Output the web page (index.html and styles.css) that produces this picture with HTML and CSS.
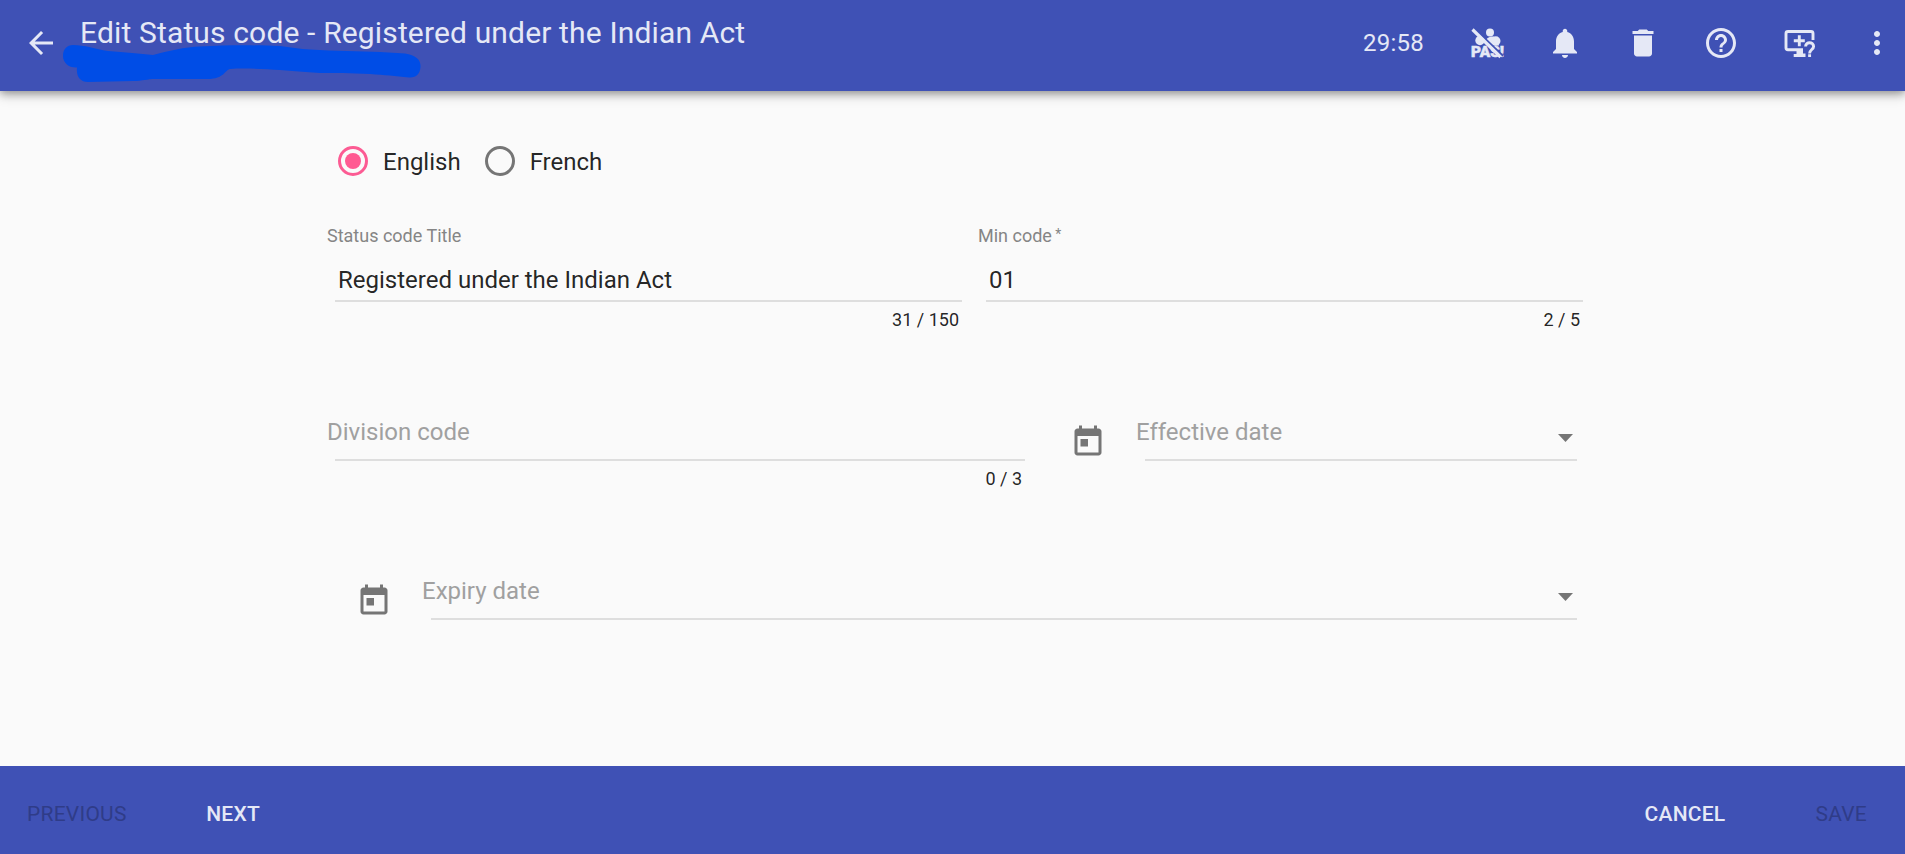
FILE: index.html
```html
<!DOCTYPE html>
<html lang="en">
<head>
<meta charset="utf-8">
<title>Edit Status code</title>
<link rel="stylesheet" href="styles.css">
</head>
<body>
<header class="toolbar">
  <svg class="icon back" viewBox="0 0 24 24"><path d="M20 11H7.83l5.59-5.59L12 4l-8 8 8 8 1.41-1.41L7.83 13H20v-2z"/></svg>
  <h1 class="title">Edit Status code - Registered under the Indian Act</h1>
  <svg class="marker" viewBox="60 40 364 46"><path d="M73 45C85 45 95 49 108 51C125 52 140 54 153 55C168 51 185 47 200 46.500C225 45 255 45 280 46C290 47 300 49 310 49.500C335 51 360 51 380 52L405 53.500C416 55 421 60 420.500 67C420 74 416 78 409 77.500C395 76 385 75 370 74C350 73 335 73 320 73C305 72 292 71 280 70C265 69 245 68 230 69C225 70 224 79 208 79H155C147 79 143 81 133 81L88 82C80 82 76 76 77 67.500C69 68 63 63 63 56C63 49 67 45 73 45Z"/></svg>
  <div class="actions">
    <span class="timer">29:58</span>
    <svg class="icon" viewBox="0 0 36 36">
      <circle cx="21" cy="7.500" r="4"/><circle cx="11" cy="15.500" r="4.700"/>
      <circle cx="26.800" cy="16" r="4.700"/><path d="M17 14.500c2-2.500 5-3 8-3l5 9H22z"/>
      <text class="pas" x="2" y="31.500" textLength="33" lengthAdjust="spacingAndGlyphs">PAS!</text>
      <path class="cut" d="M5.500 3.500L34 31"/><path class="slash" d="M3.500 4.500L31.500 32"/>
    </svg>
    <svg class="icon" viewBox="0 0 24 24"><path d="M12 22c1.100 0 2-.9 2-2h-4c0 1.100.89 2 2 2zm6-6v-5c0-3.070-1.640-5.640-4.500-6.320V4c0-.83-.67-1.500-1.500-1.500s-1.500.67-1.500 1.500v.68C7.630 5.360 6 7.920 6 11v5l-2 2v1h16v-1l-2-2z"/></svg>
    <svg class="icon" viewBox="0 0 24 24"><path d="M6 19c0 1.100.9 2 2 2h8c1.100 0 2-.9 2-2V7H6v12zM19 4h-3.500l-1-1h-5l-1 1H5v2h14V4z"/></svg>
    <svg class="icon" viewBox="0 0 24 24"><path d="M11 18h2v-2h-2v2zm1-16C6.480 2 2 6.480 2 12s4.480 10 10 10 10-4.480 10-10S17.520 2 12 2zm0 18c-4.410 0-8-3.590-8-8s3.590-8 8-8 8 3.590 8 8-3.590 8-8 8zm0-14c-2.210 0-4 1.790-4 4h2c0-1.100.9-2 2-2s2 .9 2 2c0 2-3 1.750-3 5h2c0-2.250 3-2.500 3-5 0-2.210-1.790-4-4-4z"/></svg>
    <svg class="icon" viewBox="0 0 36 36">
      <path class="line" d="M22 24.800H7a2 2 0 0 1-2-2V8.500a2 2 0 0 1 2-2h23a2 2 0 0 1 2 2V15"/>
      <path class="line" d="M18.300 10.200v11M12.800 15.700h11"/>
      <path d="M15.500 25h6.500v3.500h2.500V32H12.700v-3h2.800z"/>
      <path class="line" d="M24.600 21.500c0-5 8-5 8 0 0 3-4 3.200-4 7M28.600 29.300v2.800"/>
    </svg>
    <svg class="icon" viewBox="0 0 24 24"><path d="M12 8c1.100 0 2-.9 2-2s-.9-2-2-2-2 .9-2 2 .9 2 2 2zm0 2c-1.100 0-2 .9-2 2s.9 2 2 2 2-.9 2-2-.9-2-2-2zm0 6c-1.100 0-2 .9-2 2s.9 2 2 2 2-.9 2-2-.9-2-2-2z"/></svg>
  </div>
</header>
<main class="content">
  <div class="radios">
    <label class="radio checked"><span class="ring"></span><span class="radio-text">English</span></label>
    <label class="radio"><span class="ring"></span><span class="radio-text">French</span></label>
  </div>
  <div class="row row-top">
    <div class="field title-field">
      <div class="label small">Status code Title</div>
      <div class="value">Registered under the Indian Act</div>
      <div class="count">31 / 150</div>
    </div>
    <div class="field min-field">
      <div class="label small">Min code<span class="star"> *</span></div>
      <div class="value">01</div>
      <div class="count">2 / 5</div>
    </div>
  </div>
  <div class="row">
    <div class="field division">
      <div class="label">Division code</div>
      <div class="rule"></div>
      <div class="count">0 / 3</div>
    </div>
    <svg class="icon cal cal-effective" viewBox="0 0 24 24"><path d="M19 3h-1V1h-2v2H8V1H6v2H5c-1.110 0-1.990.9-1.990 2L3 19c0 1.100.89 2 2 2h14c1.100 0 2-.9 2-2V5c0-1.100-.9-2-2-2zm0 16H5V8h14v11zM7 10h5v5H7z"/></svg>
    <div class="field date">
      <div class="label">Effective date<span class="arrow"></span></div>
      <div class="rule"></div>
    </div>
  </div>
  <div class="row">
    <svg class="icon cal cal-expiry" viewBox="0 0 24 24"><path d="M19 3h-1V1h-2v2H8V1H6v2H5c-1.110 0-1.990.9-1.990 2L3 19c0 1.100.89 2 2 2h14c1.100 0 2-.9 2-2V5c0-1.100-.9-2-2-2zm0 16H5V8h14v11zM7 10h5v5H7z"/></svg>
    <div class="field date">
      <div class="label">Expiry date<span class="arrow"></span></div>
      <div class="rule"></div>
    </div>
  </div>
</main>
<footer class="footer">
  <span class="btn off previous">PREVIOUS</span>
  <span class="btn next">NEXT</span>
  <span class="btn cancel">CANCEL</span>
  <span class="btn off">SAVE</span>
</footer>
</body>
</html>
```

FILE: styles.css
```css
* { box-sizing: border-box; }
body {
  margin: 0;
  height: 854px;
  display: flex;
  flex-direction: column;
  background: #fafafa;
  color: rgba(0, 0, 0, .87);
  font-family: Roboto, sans-serif;
  font-size: 24px;
  letter-spacing: .01em;
  overflow: hidden;
}
.toolbar {
  position: relative;
  flex: none;
  height: 91px;
  display: flex;
  align-items: center;
  padding: 0 10px 5px 23px;
  background: #3f51b5;
  color: #e5e8f6;
  box-shadow: 0 2px 8px rgba(0, 0, 0, .3), 0 4px 12px rgba(0, 0, 0, .2);
}
.icon { display: block; flex: none; width: 36px; height: 36px; fill: currentColor; }
.title {
  align-self: flex-start;
  margin: 15px 0 0 21px;
  font-size: 30px;
  line-height: 36px;
  font-weight: 400;
  letter-spacing: .005em;
  white-space: nowrap;
}
.marker { position: absolute; left: 60px; top: 40px; width: 364px; height: 46px; fill: #004de6; }
.actions { display: flex; align-items: center; gap: 42px; margin-left: auto; }
.timer { line-height: 28px; margin-right: 3px; }
.pas { font-size: 14.5px; font-weight: 900; letter-spacing: 0; stroke: currentColor; stroke-width: .5px; }
.cut { stroke: #3f51b5; stroke-width: 2; }
.slash { stroke: currentColor; stroke-width: 3.2; }
.line { fill: none; stroke: currentColor; stroke-width: 2.9; }
.content { flex: 1; padding: 55px 0 0 327px; letter-spacing: 0; }
.radios { display: flex; gap: 24px; padding-left: 11px; }
.radio { display: flex; gap: 15px; height: 30px; }
.ring { width: 30px; height: 30px; border: 3px solid #757575; border-radius: 50%; display: grid; place-items: center; }
.checked .ring { border-color: #fc5b93; }
.checked .ring::after { content: ""; width: 16px; height: 16px; border-radius: 50%; background: #ff5a92; }
.radio-text { line-height: 30px; padding-top: 1px; }
.row { display: flex; margin-top: 87px; height: 72px; }
.row-top { margin-top: 49px; height: 106px; gap: 16px; }
.title-field { width: 635px; }
.min-field { width: 605px; }
.label { display: flex; justify-content: space-between; line-height: 28px; color: #a0a0a0; }
.small { display: block; height: 22px; font-size: 18px; line-height: 22px; margin-bottom: 19px; color: #858585; }
.star { font-size: 14px; line-height: 1; vertical-align: 3px; }
.value { margin-left: 8px; padding: 0 0 6px 3px; line-height: 28px; height: 36px; border-bottom: 2px solid #dedede; }
.rule { height: 2px; margin: 13px 0 0 8px; background: #dedede; }
.count { margin: 7px 3px 0 0; font-size: 18px; line-height: 22px; text-align: right; }
.division { width: 698px; }
.cal { color: #757575; }
.cal-effective { margin: 6px 30px 0 45px; }
.cal-expiry { margin: 6px 30px 0 29px; }
.date { flex: 1; margin-right: 328px; }
.date .rule { margin-left: 9px; }
.arrow { margin: 16px 4px 0 0; width: 15px; height: 8px; background: #757575; clip-path: polygon(0 0, 100% 0, 50% 100%); }
.footer {
  flex: none;
  height: 88px;
  display: flex;
  align-items: center;
  padding: 8px 38px 0 27px;
  background: #3f51b5;
  color: #e5e8f6;
  font-size: 21px;
  line-height: 26px;
}
.btn { font-weight: 500; }
.off { font-weight: 400; color: #2f3c88; }
.previous { margin-right: 79.5px; }
.cancel { margin: 0 90px 0 auto; }
```
